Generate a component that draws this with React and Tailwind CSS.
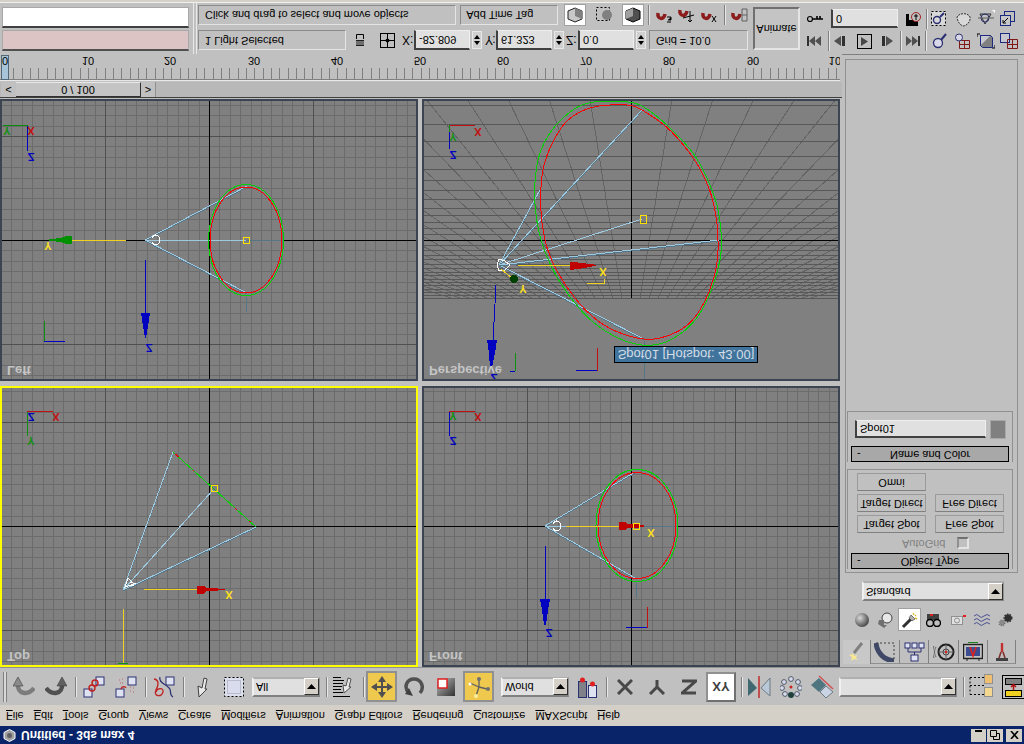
import React from 'react';

// the whole reference is mirrored top to bottom, so every label gets flipped
const T = ({ children, className = '' }) => (
  <span className={`inline-block -scale-y-100 whitespace-nowrap ${className}`}>{children}</span>
);

const Ic = ({ w = 22, h = 22, children, className = '' }) => (
  <svg width={w} height={h} viewBox={`0 0 ${w} ${h}`} className={`block shrink-0 ${className}`}>
    {children}
  </svg>
);

const Div = ({ className = '' }) => (
  <div className={`w-[2px] h-[20px] shrink-0 border-l border-[#808080] border-r border-r-[#e8e8e8] ${className}`} />
);

const Field = ({ children, className = '' }) => (
  <div className={`flex items-center pl-[3px] bg-[#e0e0e0] border-l-2 border-b-2 border-[#404040] border-t border-t-[#eeeeee] border-r border-r-[#eeeeee] ${className}`}>
    <T>{children}</T>
  </div>
);

const Spinner = ({ className = '' }) => (
  <div className={`w-[10px] h-[18px] shrink-0 bg-[#d0d0d0] border border-[#e8e8e8] ${className}`}>
    <Ic w={8} h={16}>
      <polygon points="4,3 1,7 7,7" fill="#000" />
      <polygon points="4,13 1,9 7,9" fill="#000" />
    </Ic>
  </div>
);

const Dropdown = ({ children, className = '' }) => (
  <div className={`flex items-center justify-between h-[20px] shrink-0 bg-[#e0e0e0] border-t-2 border-t-[#b0b0b0] border-b-2 border-b-[#808080] border-r border-r-[#909090] border-l-2 border-l-[#f0f0f0] ${className}`}>
    <T className="pl-[2px]">{children}</T>
    <div className="w-[15px] h-[17px] bg-[#d4d0c8] border border-[#303030] border-t-white border-l-white flex items-center justify-center">
      <Ic w={9} h={5}>
        <polygon points="4.5,0 0,5 9,5" fill="#000" />
      </Ic>
    </div>
  </div>
);

const Box = ({ children, className = '' }) => (
  <div className={`flex items-center border border-[#8a8a8a] border-b-[#e4e4e4] border-r-[#e4e4e4] ${className}`}>
    <T>{children}</T>
  </div>
);

const Btn = ({ children, className = '' }) => (
  <div className={`flex items-center justify-center h-[18px] w-[69px] border border-[#9a9a9a] border-b-[#808080] bg-[#c0c0c0] ${className}`}>
    <T>{children}</T>
  </div>
);

const Rollout = ({ children }) => (
  <div className="relative flex items-center justify-center h-[16px] w-[158px] ml-[3px] bg-[#a8a8a8] border border-black">
    <T className="absolute left-[5px]">-</T>
    <T>{children}</T>
  </div>
);

// toolbar glyphs
const Undo = ({ flip }) => (
  <Ic>
    <g transform={flip ? 'translate(22 0) scale(-1 1)' : undefined}>
      <path d="M5 8 C4 18 15 20 21 12" fill="none" stroke={flip ? '#505050' : '#7c7c7c'} strokeWidth="4.5" />
      <polygon points="5,1 0,10 10,10" fill={flip ? '#606060' : '#8a8a8a'} stroke="#404040" strokeWidth="0.6" />
    </g>
  </Ic>
);
const Sq = ({ x, y, s = 8 }) => <rect x={x} y={y} width={s} height={s} fill="#dfe2f0" stroke="#2a3070" />;
const Link = () => (
  <Ic>
    <Sq x={13} y={1} />
    <Sq x={1} y={13} />
    <circle cx="12" cy="7" r="3" fill="none" stroke="#c02020" strokeWidth="1.4" />
    <circle cx="9" cy="12" r="3" fill="none" stroke="#c02020" strokeWidth="1.4" />
  </Ic>
);
const Unlink = () => (
  <Ic>
    <Sq x={13} y={1} />
    <Sq x={1} y={13} />
    <path d="M4 4h1M7 3h1M5 7h3M8 11h2M15 11h1M18 12h1M15 15h2M18 16h1" stroke="#c06060" strokeDasharray="1 1" />
    <path d="M6 13 C7 10 10 10 11 12" fill="none" stroke="#c02020" strokeWidth="1.4" />
  </Ic>
);
const Bind = () => (
  <Ic>
    <Sq x={13} y={1} />
    <path d="M1 3 C7 4 5 10 3 14 C0 20 8 22 10 16 C11 11 4 12 3 16" fill="none" stroke="#c02020" strokeWidth="1.3" />
    <path d="M7 1 C5 6 12 8 15 11 C20 14 15 18 20 21" fill="none" stroke="#2a3070" strokeWidth="1.2" />
  </Ic>
);
const Cursor = () => (
  <Ic w={11} h={22}>
    <polygon points="2,21 1,10 5,12 7,2 10,3 8,13 10,13" fill="#e8e8e8" stroke="#404040" />
  </Ic>
);
const Region = () => (
  <Ic>
    <rect x="1.5" y="1.5" width="19" height="19" fill="#dcdfee" stroke="#000" strokeDasharray="2 2" />
    <rect x="4.5" y="4.5" width="13" height="13" fill="#d8dcec" stroke="#b8bcc8" />
  </Ic>
);
const Names = () => (
  <Ic w={19} h={22}>
    <path d="M0 1.5h8M0 4.5h11M0 7.5h10M0 10.5h9M0 13.5h8M0 16.5h10M0 20.5h17" stroke="#000" />
    <polygon points="11,17 10,9 13,10 15,2 18,3 16,11 18,11" fill="#e8e8e8" stroke="#505050" />
  </Ic>
);
const Move = () => (
  <Ic>
    <path d="M11 3V19M3 11H19" stroke="#505050" strokeWidth="2" />
    <polygon points="11,0 7,6 15,6" fill="#505050" />
    <polygon points="11,22 7,16 15,16" fill="#505050" />
    <polygon points="0,11 6,7 6,15" fill="#505050" />
    <polygon points="22,11 16,7 16,15" fill="#505050" />
  </Ic>
);
const Rotate = () => (
  <Ic>
    <path d="M6 17 C0 11 4 3 11 3 C18 3 22 11 17 17" fill="none" stroke="#505050" strokeWidth="3.5" />
    <polygon points="2,18 10,20 6,12" fill="#404040" />
  </Ic>
);
const Scale = () => (
  <Ic w={18} h={18}>
    <defs>
      <linearGradient id="sc" x1="0" x2="1" y1="0" y2="1">
        <stop offset="0" stopColor="#c0c0c0" />
        <stop offset="1" stopColor="#303030" />
      </linearGradient>
    </defs>
    <rect x="0" y="0" width="18" height="18" fill="url(#sc)" />
    <rect x="1" y="1" width="9" height="9" fill="#fff" stroke="#e02020" strokeWidth="1.5" />
  </Ic>
);
const Manip = () => (
  <Ic>
    <path d="M11 2 L11 11 L2 7 M11 11 L19 13 M11 11 L8 20" fill="none" stroke="#606060" strokeWidth="1.3" />
    <circle cx="11" cy="3" r="2" fill="#707070" />
    <circle cx="2" cy="8" r="1.5" fill="#fff" />
    <circle cx="20" cy="13" r="2" fill="#707070" />
    <circle cx="8" cy="20" r="2" fill="#f8f0a0" />
  </Ic>
);
const Pivot = () => (
  <Ic w={20} h={22}>
    <rect x="1.5" y="5.5" width="8" height="16" fill="#808088" stroke="#2a3070" />
    <rect x="11.5" y="9.5" width="8" height="12" fill="#dfe2f0" stroke="#2a3070" />
    <circle cx="5.5" cy="4" r="2.5" fill="#e02020" />
    <circle cx="15.5" cy="8" r="2.5" fill="#e02020" />
  </Ic>
);
const Axis = ({ d }) => (
  <Ic w={16} h={16}>
    <path d={d} fill="none" stroke="#484848" strokeWidth="3" />
  </Ic>
);
const Mirror = () => (
  <Ic w={23} h={22}>
    <polygon points="0,2 9,12 0,20" fill="#3f6870" />
    <polygon points="22,2 13,12 22,20" fill="#b8c8d8" stroke="#707880" />
    <path d="M11 0V22" stroke="#c05050" strokeWidth="2" />
  </Ic>
);
const ArrayIc = () => (
  <Ic>
    {[[11, 3], [4, 6], [18, 6], [2, 12], [20, 12], [5, 18], [17, 18]].map(([x, y]) => (
      <circle key={`${x}-${y}`} cx={x} cy={y} r="2.4" fill="#d8dcec" stroke="#505868" />
    ))}
    <circle cx="11" cy="19" r="3" fill="#204040" />
    <circle cx="11" cy="11" r="1.5" fill="#d02020" />
  </Ic>
);
const Align = () => (
  <Ic w={23} h={23}>
    <polygon points="0,10 8,3 15,10 8,17" fill="#4f7580" />
    <polygon points="9,17 15,11 22,17 15,23" fill="#c8d4e4" stroke="#707880" />
    <path d="M8 1 L22 14" stroke="#d05050" strokeWidth="1.5" />
  </Ic>
);
const Layers = () => (
  <Ic w={25} h={26}>
    <path d="M1 3.5H15M1 3.5V20.5M1 11.5H15M1 20.5H15" stroke="#000" strokeDasharray="2 2" />
    <rect x="15.5" y="0.5" width="8" height="9" fill="#f0c070" stroke="#909090" />
    <rect x="15.5" y="13.5" width="8" height="9" fill="#f4d890" stroke="#909090" />
  </Ic>
);
const Last = () => (
  <Ic w={23} h={24}>
    <rect x="0.5" y="0.5" width="22" height="23" fill="none" stroke="#000" />
    <rect x="3.5" y="3.5" width="16" height="6" fill="#808080" stroke="#000" />
    <rect x="3.5" y="15.5" width="16" height="6" fill="#f0d020" stroke="#000" />
    <path d="M11.5 15V10M9 12l2.5-2.5L14 12" fill="none" stroke="#b01010" strokeWidth="1.5" />
  </Ic>
);
const Magnet = ({ extra, className = '' }) => (
  <Ic w={18} h={18} className={className}>
    <path d="M3 7 C2 14 9 14 10 8" fill="none" stroke="#8c1c1c" strokeWidth="3.5" />
    {extra}
  </Ic>
);

const Prev = ({ kind }) => (
  <Ic w={16} h={14}>
    {kind === 'start' && (<><rect x="0" y="2" width="2" height="10" fill="#303030" /><polygon points="2,7 8,2 8,12" fill="#505050" /><polygon points="8,7 14,2 14,12" fill="#505050" /></>)}
    {kind === 'prev' && (<><polygon points="1,7 8,2 8,12" fill="#505050" /><rect x="9" y="2" width="3" height="10" fill="#303030" /></>)}
    {kind === 'next' && (<><rect x="1" y="2" width="3" height="10" fill="#303030" /><polygon points="5,2 12,7 5,12" fill="#505050" /></>)}
    {kind === 'end' && (<><polygon points="1,2 7,7 1,12" fill="#505050" /><polygon points="7,2 13,7 7,12" fill="#505050" /><rect x="13" y="2" width="2" height="10" fill="#303030" /></>)}
  </Ic>
);

const StatusBar = () => (
  <div className="flex h-[51px] shrink-0">
    <div className="ml-[2px] mt-[4px] w-[187px] flex flex-col gap-[2px] shrink-0">
      <div className="h-[21px] bg-white border border-[#a8a8a8] border-b-2 border-b-[#404040]" />
      <div className="h-[21px] bg-[#dcc4c4] border border-[#a8a8a8] border-b-2 border-b-[#505050]" />
    </div>
    <div className="ml-[4px] w-[4px] h-[51px] shrink-0 border-l border-r border-[#e8e8e8]" />
    <div className="ml-[1px] w-[550px] shrink-0 flex flex-col gap-[4px] pt-[1px]">
      <div className="flex items-center h-[21px]">
        <Box className="w-[259px] h-[20px] pl-[6px]">Click and drag to select and move objects</Box>
        <Box className="ml-[4px] w-[98px] h-[20px] pl-[5px]">Add Time Tag</Box>
        <div className="ml-[6px] w-[22px] h-[22px] bg-white border border-[#a0a0a0] flex items-center justify-center shrink-0">
          <Ic w={16} h={16}>
            <polygon points="8,1 15,4 15,12 8,15 1,12 1,4" fill="#c8c8c8" stroke="#202020" />
            <polygon points="8,1 15,4 15,12 8,9" fill="#808080" />
          </Ic>
        </div>
        <Ic w={20} h={18} className="ml-[9px]">
          <rect x="1.5" y="1.5" width="13" height="13" fill="none" stroke="#000" strokeDasharray="2 2" />
          <circle cx="12" cy="9" r="5" fill="#808080" />
        </Ic>
        <div className="ml-[7px] w-[22px] h-[22px] bg-white border border-[#a0a0a0] flex items-center justify-center shrink-0">
          <Ic w={16} h={16}>
            <polygon points="8,1 15,4 15,12 8,15 1,12 1,4" fill="#505050" stroke="#000" />
            <polygon points="1,4 8,1 8,9 1,12" fill="#a0a0a0" />
          </Ic>
        </div>
        <Div className="ml-[4px]" />
        <Magnet className="ml-[5px]" extra={<path d="M12 11h4M16 11v3h-3M12 16h4" stroke="#000" />} />
        <Ic w={18} h={18} className="ml-[5px]">
          <path d="M2 4 C1 11 8 11 9 5" fill="none" stroke="#8c1c1c" strokeWidth="3.5" />
          <path d="M5 12 L16 9 M12 5v10M10 14l2 2 2-2" stroke="#000" fill="none" />
        </Ic>
        <Magnet className="ml-[4px]" extra={<path d="M12 10l4 6M16 10l-4 6" stroke="#000" />} />
        <Div className="ml-[6px]" />
        <Magnet className="ml-[4px]" extra={<path d="M12 3h5v12h-5zM12 9h5" fill="none" stroke="#606060" />} />
      </div>
      <div className="flex items-center h-[22px]">
        <Box className="w-[148px] h-[20px] pl-[6px]">1 Light Selected</Box>
        <Ic w={8} h={14} className="ml-[10px]">
          <path d="M0.5 1.5H7.5V6M0.5 1.5V6" fill="none" stroke="#000" />
          <rect x="0" y="7" width="8" height="6" fill="#202020" />
          <path d="M0 9h8M0 11h8" stroke="#c0c0c0" />
        </Ic>
        <Ic w={15} h={15} className="ml-[16px]">
          <rect x="0.5" y="0.5" width="14" height="14" fill="none" stroke="#000" />
          <path d="M7.5 0V15M0 7.5H15" stroke="#000" />
          <circle cx="7.5" cy="7.5" r="2" fill="#000" />
        </Ic>
        <T className="ml-[7px] w-[12px] text-[12px]">X:</T>
        <Field className="w-[56px] h-[20px] shrink-0">-82.809</Field>
        <Spinner className="ml-[2px]" />
        <T className="ml-[3px] w-[11px] text-[12px]">Y:</T>
        <Field className="w-[56px] h-[20px] shrink-0">61.323</Field>
        <Spinner className="ml-[2px]" />
        <T className="ml-[2px] w-[12px] text-[12px]">Z:</T>
        <Field className="w-[56px] h-[20px] shrink-0">0.0</Field>
        <Spinner className="ml-[2px]" />
        <Box className="ml-[3px] w-[99px] h-[20px] pl-[6px]">Grid = 10.0</Box>
      </div>
    </div>
    <div className="ml-[5px] mt-[4px] w-[47px] h-[43px] shrink-0 flex items-center justify-center bg-[#c4c4c4] border-2 border-[#707070] border-r-[#e4e4e4] border-b-[#e4e4e4]">
      <T>Animate</T>
    </div>
    <div className="ml-[7px] flex flex-col shrink-0">
      <div className="flex items-center h-[25px] mt-[3px]">
        <Ic w={16} h={10}>
          <circle cx="3" cy="5" r="2.5" fill="none" stroke="#000" strokeWidth="1.2" />
          <path d="M5 5H16M10 5V2M13 5V2" stroke="#000" strokeWidth="1.6" />
        </Ic>
        <Field className="ml-[8px] w-[67px] h-[19px] shrink-0">0</Field>
        <Ic w={16} h={16} className="ml-[8px]">
          <rect x="0" y="9" width="12" height="6" fill="#000" />
          <rect x="0" y="3" width="3" height="8" fill="#000" />
          <circle cx="10" cy="6" r="4.5" fill="#c0c0c0" stroke="#a02020" />
          <path d="M10 3v6M8 5h4" stroke="#000" />
        </Ic>
        <Div className="ml-[4px]" />
        <Ic w={15} h={15} className="ml-[3px]">
          <rect x="0.5" y="0.5" width="14" height="14" fill="#d8d8d8" stroke="#000" strokeDasharray="2 2" />
          <circle cx="6" cy="9" r="3.5" fill="none" stroke="#2a3070" strokeWidth="1.4" />
          <path d="M9 6l4-4" stroke="#2a3070" strokeWidth="2" />
        </Ic>
        <Ic w={16} h={16} className="ml-[9px]">
          <path d="M2 7C2 2 13 1 15 6C16 10 12 15 8 15C5 14 3 11 2 7Z" fill="#d8d8d8" stroke="#303030" strokeDasharray="2 1" />
        </Ic>
        <Ic w={18} h={17} className="ml-[6px]">
          <polygon points="3,4 14,4 8,14" fill="none" stroke="#303030" />
          <circle cx="8" cy="8" r="4" fill="none" stroke="#2a3070" />
          <path d="M1 8h16" stroke="#606060" />
          <polygon points="15,0 18,0 18,3" fill="#fff" />
        </Ic>
        <Ic w={15} h={15} className="ml-[5px]">
          <rect x="4.5" y="0.5" width="10" height="10" fill="none" stroke="#1c2a80" />
          <rect x="0.5" y="4.5" width="10" height="10" fill="#c8c8c8" stroke="#1c2a80" />
          <path d="M3 12l5-5M3 9v3h3" fill="none" stroke="#000" />
        </Ic>
      </div>
      <div className="flex items-center h-[18px] mt-[1px]">
        <Prev kind="start" />
        <Div className="ml-[5px] h-[14px]" />
        <div className="ml-[3px]"><Prev kind="prev" /></div>
        <Ic w={15} h={15} className="ml-[8px]">
          <rect x="0.5" y="0.5" width="14" height="14" fill="#c0c0c0" stroke="#000" />
          <polygon points="4,3 11,7.5 4,12" fill="#484848" />
        </Ic>
        <div className="ml-[9px]"><Prev kind="next" /></div>
        <Div className="ml-[3px] h-[14px]" />
        <div className="ml-[3px]"><Prev kind="end" /></div>
        <Div className="ml-[4px] h-[14px]" />
        <Ic w={15} h={16} className="ml-[5px]">
          <circle cx="6" cy="10" r="4.5" fill="#d8d8e8" stroke="#2a3070" strokeWidth="1.3" />
          <path d="M9 7l5-6" stroke="#2a3070" strokeWidth="2" />
        </Ic>
        <Ic w={16} h={16} className="ml-[7px]">
          <path d="M5.5 7.5H15.5V15.5H5.5ZM10.5 7.5V15.5M5.5 11.5H15.5" fill="none" stroke="#801818" />
          <circle cx="5" cy="4.5" r="3.5" fill="#d8d8e8" stroke="#2a3070" />
        </Ic>
        <Ic w={18} h={16} className="ml-[7px]">
          <path d="M0 1h3M0 1v3M15 15h3M18 15v-3" stroke="#000" />
          <rect x="3.5" y="2.5" width="10" height="10" fill="#c8c8d0" stroke="#1c2a80" />
          <path d="M13.5 2.5l2 2v10h-10l-2-2" fill="#808080" stroke="#1c2a80" />
        </Ic>
        <Ic w={18} h={16} className="ml-[5px]">
          <rect x="0.5" y="0.5" width="9" height="9" fill="#c8c8d0" stroke="#1c2a80" />
          <path d="M7.5 6.5H17.5V15.5H7.5ZM12.5 6.5V15.5M7.5 11.5H17.5" fill="none" stroke="#801818" />
        </Ic>
      </div>
    </div>
  </div>
);

const LABELS = [[5, '0'], [88, '10'], [170, '20'], [254, '30'], [337, '40'], [420, '50'], [503, '60'], [586, '70'], [669, '80'], [753, '90'], [838, '100']];

const Timeline = () => (
  <svg width="840" height="28" viewBox="0 54 840 28" shapeRendering="crispEdges" className="block shrink-0">
    {Array.from({ length: 101 }, (_, i) => (
      <line key={i} x1={Math.round(5 + i * 8.31) + 0.5} x2={Math.round(5 + i * 8.31) + 0.5} y1="68" y2="79" stroke="#808080" />
    ))}
    <line x1="0" x2="840" y1="79.5" y2="79.5" stroke="#808080" />
    <line x1="0" x2="840" y1="80.5" y2="80.5" stroke="#e8e8e8" />
    <rect x="1.5" y="55.5" width="7" height="24" fill="#a8c4d8" stroke="#506878" />
    {LABELS.map(([x, t]) => (
      <text key={t} transform={`translate(${x} 57) scale(1 -1)`} textAnchor="middle" fontSize="11" fill="#000">{t}</text>
    ))}
  </svg>
);

const SliderRow = () => (
  <div className="flex h-[16px] shrink-0 bg-[#b8b8b8] border-b border-[#404040]">
    <div className="ml-[1px] w-[15px] flex items-center justify-center bg-[#c0c0c0]"><T>&lt;</T></div>
    <div className="w-[125px] flex items-center justify-center bg-[#c4c4c4] border-t border-[#e8e8e8] border-r border-r-[#303030] border-b border-b-[#303030]"><T>0 / 100</T></div>
    <div className="w-[15px] flex items-center justify-center bg-[#c0c0c0] border-r border-[#909090]"><T>&gt;</T></div>
  </div>
);

// x/y/z tags drawn inside a viewport, y is the top of the mirrored letter
const Tag = ({ x, y, c, children, size = 11 }) => (
  <text transform={`translate(${x} ${y}) scale(1 -1)`} textAnchor="middle" fontSize={size} fontWeight="bold" fill={c}>{children}</text>
);

const Beam = ({ x1, y1, x2, y2 }) => (
  <>
    <line x1={x1} y1={y1 + 1} x2={x2} y2={y2 + 1} stroke="#567688" />
    <line x1={x1} y1={y1} x2={x2} y2={y2} stroke="#9cc8e0" />
  </>
);

const flatGrid = (cx, cy, x, y, w, h) => {
  const lines = [];
  for (let k = -40; k <= 40; k++) {
    const lx = Math.round(cx + k * 10.4) + 0.5;
    const ly = Math.round(cy + k * 10.4) + 0.5;
    const col = k === 0 ? null : k % 10 === 0 ? '#505050' : '#6c6c6c';
    if (!col) continue;
    if (lx > x && lx < x + w) lines.push([lx, y, lx, y + h, col, k % 10 === 0]);
    if (ly > y && ly < y + h) lines.push([x, ly, x + w, ly, col, k % 10 === 0]);
  }
  lines.sort((a, b) => a[5] - b[5]);
  return (
    <>
      {lines.map((l, i) => <line key={i} x1={l[0]} y1={l[1]} x2={l[2]} y2={l[3]} stroke={l[4]} />)}
      <line x1={cx + 0.5} x2={cx + 0.5} y1={y} y2={y + h} stroke="#000" />
      <line x1={x} x2={x + w} y1={cy + 0.5} y2={cy + 0.5} stroke="#000" />
    </>
  );
};

const PERSP_Z = [28, 85, 135, 180, 218, 252, 283, 310, 335, 358, 378, 397, 415, 448, 463, 477, 490, 503, 515, 527, 538, 548, 558, 568, 578, 588, 597, 605];

const perspGrid = () => (
  <>
    {Array.from({ length: 41 }, (_, i) => i - 20).filter((k) => k !== 0).map((k) => (
      <line key={k} x1={631 + k * 41} y1="99" x2={631 + k * 9} y2="298" stroke="#646464" />
    ))}
    {PERSP_Z.map((z) => (
      <line key={z} x1="424" x2="838" y1={Math.round(96 + z / 3) + 0.5} y2={Math.round(96 + z / 3) + 0.5} stroke="#585858" />
    ))}
    <line x1="631.5" x2="631.5" y1="99" y2="298" stroke="#000" />
    <line x1="424" x2="838" y1="240.5" y2="240.5" stroke="#000" />
  </>
);

// closed smooth curve through the midpoints of the traced outline
const egg = (pts) => {
  const p = pts.map(([x, y]) => [422 + x / 3, 96 + y / 3]);
  const mid = (a, b) => `${(a[0] + b[0]) / 2} ${(a[1] + b[1]) / 2}`;
  let d = `M${mid(p[p.length - 1], p[0])}`;
  p.forEach((pt, i) => {
    d += ` Q${pt[0]} ${pt[1]} ${mid(pt, p[(i + 1) % p.length])}`;
  });
  return `${d} Z`;
};
const RED_EGG = [[600, 25], [510, 30], [440, 65], [400, 120], [365, 200], [355, 280], [357, 380], [380, 480], [430, 570], [490, 645], [560, 700], [660, 733], [730, 725], [800, 690], [850, 620], [885, 520], [890, 430], [880, 340], [860, 270], [820, 190], [745, 100], [690, 60], [640, 30]];
const GREEN_EGG = [[490, 15], [420, 65], [375, 120], [345, 190], [335, 300], [350, 420], [390, 520], [440, 600], [500, 670], [570, 720], [650, 750], [730, 745], [810, 690], [860, 610], [895, 500], [900, 430], [890, 340], [870, 280], [825, 180], [745, 95], [680, 40], [630, 15]];

const Viewport = ({ x, y, w, h, label, active, children }) => (
  <div className={`relative overflow-hidden border-2 ${active ? 'border-[#ffff00]' : 'border-[#3c4452]'}`}>
    <svg width={w - 4} height={h - 4} viewBox={`${x + 2} ${y + 2} ${w - 4} ${h - 4}`} shapeRendering="crispEdges" className="block bg-[#808080]">
      {children}
    </svg>
    <T className="absolute left-[5px] bottom-[2px] text-[13px] font-bold text-[#c4c4c4]">{label}</T>
  </div>
);

const Viewports = () => (
  <div className="grid grid-cols-[418px_418px] grid-rows-[282px_281px] gap-x-[4px] gap-y-[5px] mt-[1px]">
    <Viewport x={0} y={99} w={418} h={282} label="Left">
      {flatGrid(209, 240, 2, 101, 414, 278)}
      <path d="M3 125.5H27.5V151" fill="none" stroke="#0a8a0a" />
      <line x1="27.5" y1="126" x2="27.5" y2="151" stroke="#0000c0" />
      <Tag x={7} y={127} c="#109010">Y</Tag>
      <Tag x={31} y={127} c="#c01010">X</Tag>
      <Tag x={31} y={153} c="#0000c0">Z</Tag>
      <line x1="72" x2="126" y1="240.5" y2="240.5" stroke="#f0d020" strokeWidth="1" />
      <polygon points="45,240 60,238 66,236 72,236 72,244 66,244 60,242" fill="#009000" />
      <Tag x={48} y={242} c="#ffe020">Y</Tag>
      <Beam x1={145} y1={240} x2={247} y2={186} />
      <Beam x1={145} y1={240} x2={247} y2={293} />
      <line x1="145" x2="246" y1="240.5" y2="240.5" stroke="#9cc8e0" />
      <line x1="246" x2="283" y1="240.5" y2="240.5" stroke="#567688" />
      <line x1="246.5" x2="246.5" y1="297" y2="312" stroke="#567688" />
      <path d="M155 235 A5 5 0 0 1 155 245 M155 235 A5 5 0 0 0 152 238 M155 245 A5 5 0 0 1 152 242" fill="none" stroke="#fff" strokeWidth="1.2" />
      <ellipse cx="246" cy="240" rx="37.5" ry="55.5" fill="none" stroke="#00d000" />
      <ellipse cx="246" cy="240" rx="36" ry="53" fill="none" stroke="#ff0000" />
      <rect x="243.5" y="237.5" width="6" height="6" fill="none" stroke="#ffe000" />
      <line x1="145.5" x2="145.5" y1="260" y2="314" stroke="#0000c0" />
      <polygon points="141,313 150,313 148,326 146,338 145,338 143,326" fill="#0000c0" />
      <Tag x={149} y={344} c="#0000c0">Z</Tag>
      <path d="M44.5 321V341.5" fill="none" stroke="#109010" />
      <line x1="44" x2="65" y1="341.5" y2="341.5" stroke="#0000c0" />
    </Viewport>

    <div className="relative">
      <Viewport x={422} y={99} w={418} h={282} label="Perspective">
        {perspGrid()}
        <line x1="449" x2="475" y1="125.5" y2="125.5" stroke="#c01010" />
        <line x1="449.5" x2="449.5" y1="125" y2="149" stroke="#0000c0" />
        <line x1="449.5" x2="449.5" y1="125" y2="132" stroke="#109010" />
        <Tag x={453} y={133} c="#109010">Y</Tag>
        <Tag x={478} y={128} c="#c01010">X</Tag>
        <Tag x={453} y={151} c="#0000c0">Z</Tag>
        <Beam x1={499} y1={265} x2={642} y2={110} />
        <Beam x1={499} y1={265} x2={540} y2={190} />
        <Beam x1={499} y1={265} x2={644} y2={339} />
        <Beam x1={499} y1={265} x2={719} y2={240} />
        <line x1="499" y1="265" x2="642" y2="219" stroke="#9cc8e0" />
        <line x1="644.5" x2="644.5" y1="341" y2="379" stroke="#567688" />
        <path d={egg(GREEN_EGG)} fill="none" stroke="#00d000" />
        <path d={egg(RED_EGG)} fill="none" stroke="#ff0000" />
        <rect x="640.5" y="215.5" width="6" height="8" fill="none" stroke="#ffe000" />
        <polygon points="499,259 505,261 510,265 505,270 499,271 497,265" fill="none" stroke="#fff" />
        <line x1="518" x2="570" y1="265.5" y2="265.5" stroke="#f0d020" />
        <polygon points="570,262 578,262.5 590,264 598,265 590,267 578,269 570,270" fill="#c00000" />
        <Tag x={603} y={268} c="#ffe020">X</Tag>
        <path d="M587 283.5H604.5V279" fill="none" stroke="#f0d020" />
        <line x1="501" y1="269" x2="513" y2="279" stroke="#f0d020" />
        <circle cx="514" cy="279" r="3.8" fill="#004000" />
        <Tag x={523} y={285} c="#ffe020">Y</Tag>
        <line x1="496" y1="285" x2="493" y2="341" stroke="#0000c0" />
        <polygon points="487,340 497,340 495,353 492,368 490,368 489,353" fill="#0000c0" />
        <Tag x={494} y={374} c="#0000c0">Z</Tag>
        <path d="M597.5 348V370.5" fill="none" stroke="#c01010" />
        <line x1="576" x2="597" y1="370.5" y2="370.5" stroke="#0000c0" />
        <path d="M515.5 353V371" fill="none" stroke="#109010" />
        <line x1="510" x2="515" y1="371.5" y2="371.5" stroke="#0000c0" />
      </Viewport>
      {/* hover tooltip */}
      <div className="absolute left-[192px] top-[247px] w-[144px] h-[17px] flex items-center justify-center bg-[#41749c] border border-black text-[#d4dce4] text-[13px]">
        <T>Spot01 [Hotspot: 43.00]</T>
      </div>
    </div>

    <Viewport x={0} y={386} w={418} h={281} label="Top" active>
      {flatGrid(209, 526, 2, 388, 414, 277)}
      <line x1="27" x2="53" y1="411.5" y2="411.5" stroke="#c01010" />
      <line x1="27.5" x2="27.5" y1="412" y2="436" stroke="#109010" />
      <Tag x={31} y={437} c="#109010">Y</Tag>
      <Tag x={56} y={413} c="#c01010">X</Tag>
      <Tag x={31} y={413} c="#0000c0">Z</Tag>
      <Beam x1={123} y1={590} x2={173} y2={452} />
      <Beam x1={123} y1={590} x2={256} y2={527} />
      <line x1="123" y1="590" x2="213" y2="490" stroke="#9cc8e0" />
      <line x1="173" y1="452" x2="256" y2="527" stroke="#00d000" />
      <path d="M175 454l4 3M193 470l1 1M235 508l2 2M249 521l2 1" stroke="#e00000" />
      <rect x="211.5" y="485.5" width="6" height="6" fill="none" stroke="#ffe000" />
      <path d="M128 578l-3 9 9-3zM130 582l6 2M129 585l5 1" fill="none" stroke="#fff" />
      <line x1="144" x2="197" y1="589.5" y2="589.5" stroke="#f0d020" />
      <polygon points="197,586 204,586 206,588 214,588 225,589.5 214,591 206,591 204,594 197,594" fill="#c00000" />
      <Tag x={229} y={591} c="#ffe020">X</Tag>
      <line x1="123.5" x2="123.5" y1="609" y2="663" stroke="#f0d020" />
      <line x1="118" x2="128" y1="663.5" y2="663.5" stroke="#109010" />
    </Viewport>

    <Viewport x={422} y={386} w={418} h={281} label="Front">
      {flatGrid(631, 526, 424, 388, 414, 277)}
      <line x1="449" x2="475" y1="411.5" y2="411.5" stroke="#c01010" />
      <line x1="449.5" x2="449.5" y1="412" y2="436" stroke="#0000c0" />
      <Tag x={453} y={412} c="#109010">Y</Tag>
      <Tag x={478} y={413} c="#c01010">X</Tag>
      <Tag x={453} y={437} c="#0000c0">Z</Tag>
      <Beam x1={545} y1={526} x2={635} y2={472} />
      <Beam x1={545} y1={526} x2={635} y2={578} />
      <line x1="545" x2="637" y1="526.5" y2="526.5" stroke="#9cc8e0" />
      <line x1="637" x2="677" y1="526.5" y2="526.5" stroke="#567688" />
      <line x1="636.5" x2="636.5" y1="583" y2="598" stroke="#567688" />
      <path d="M556 521 A5 5 0 0 1 556 531 M556 521 A5 5 0 0 0 553 524 M556 531 A5 5 0 0 1 553 528" fill="none" stroke="#fff" strokeWidth="1.2" />
      <ellipse cx="637" cy="525.5" rx="41" ry="56" fill="none" stroke="#00d000" />
      <ellipse cx="637" cy="525.5" rx="39" ry="53" fill="none" stroke="#ff0000" />
      <line x1="566" x2="619" y1="526.5" y2="526.5" stroke="#f0d020" />
      <polygon points="619,522 625,522 627,524 636,524 647,526 636,528 627,528 625,530 619,530" fill="#c00000" />
      <rect x="633.5" y="523.5" width="6" height="6" fill="none" stroke="#ffe000" />
      <Tag x={651} y={529} c="#ffe020">X</Tag>
      <line x1="545.5" x2="545.5" y1="546" y2="599" stroke="#0000c0" />
      <polygon points="540,599 550,599 548,610 546,625 544,625 542,610" fill="#0000c0" />
      <Tag x={549} y={629} c="#0000c0">Z</Tag>
      <path d="M647.5 607V627.5" fill="none" stroke="#c01010" />
      <line x1="626" x2="647" y1="627.5" y2="627.5" stroke="#0000c0" />
    </Viewport>
  </div>
);

const CommandPanel = () => (
  <div className="w-[182px] shrink-0 border-t border-[#808080] flex flex-col">
    <div className="ml-[3px] mt-[4px] w-[173px] h-[514px] shrink-0 border border-[#909090] flex flex-col justify-end pb-[3px] pl-[1px]">
      <div className="w-[166px] h-[51px] flex flex-col justify-between border border-[#909090] border-b-0">
        <div className="flex mt-[8px] ml-[7px]">
          <Field className="w-[131px] h-[18px] shrink-0">Spot01</Field>
          <div className="ml-[4px] w-[16px] h-[19px] bg-[#808080] border border-[#a8a8a8]" />
        </div>
        <Rollout>Name and Color</Rollout>
      </div>
      <div className="mt-[7px] w-[166px] h-[100px] flex flex-col border border-[#909090] border-b-0">
        <div className="ml-[9px] mt-[3px] flex gap-[9px] h-[18px]"><Btn>Omni</Btn></div>
        <div className="ml-[9px] mt-[3px] flex gap-[9px]"><Btn>Target Direct</Btn><Btn>Free Direct</Btn></div>
        <div className="ml-[9px] mt-[3px] flex gap-[9px]"><Btn>Target Spot</Btn><Btn>Free Spot</Btn></div>
        <div className="mt-[4px] flex items-center h-[12px] ml-[54px] text-[#808080]">
          <T>AutoGrid</T>
          <div className="ml-[12px] w-[12px] h-[12px] border-2 border-[#909090] border-t-[#707070] border-r-[#e4e4e4] border-b-[#e4e4e4]" />
        </div>
        <div className="mt-[4px]"><Rollout>Object Type</Rollout></div>
      </div>
    </div>
    <Dropdown className="ml-[20px] mt-[8px] w-[142px]">Standard</Dropdown>
    <div className="flex items-center mt-[7px] h-[23px] ml-[13px]">
      <Ic w={14} h={14}>
        <defs>
          <radialGradient id="sph" cx="0.35" cy="0.35" r="0.8">
            <stop offset="0" stopColor="#d8d8d8" />
            <stop offset="1" stopColor="#303030" />
          </radialGradient>
        </defs>
        <circle cx="7" cy="7" r="7" fill="url(#sph)" />
      </Ic>
      <Ic w={15} h={16} className="ml-[9px]">
        <circle cx="9" cy="6" r="5" fill="#e8e8e8" stroke="#404040" />
        <path d="M1 8h5v5h3l-3 3-6-4z" fill="#707070" />
      </Ic>
      <div className="ml-[5px] w-[23px] h-[23px] bg-white border border-[#a0a0a0] flex items-center justify-center">
        <Ic w={18} h={18}>
          <path d="M2 16 L11 7" stroke="#303030" strokeWidth="3" />
          <polygon points="10,4 14,8 11,10 8,7" fill="#b0b0b0" stroke="#303030" strokeWidth="0.6" />
          <path d="M12 2l1 2M15 4l-1 1M16 8l-2-1" stroke="#e0c030" strokeWidth="1.4" />
        </Ic>
      </div>
      <Ic w={15} h={14} className="ml-[5px]">
        <rect x="1" y="1" width="12" height="6" fill="#404040" />
        <rect x="4" y="1" width="3" height="2" fill="#e02020" />
        <circle cx="4" cy="10" r="3.5" fill="none" stroke="#000" strokeWidth="1.4" />
        <circle cx="11" cy="10" r="3.5" fill="none" stroke="#000" strokeWidth="1.4" />
      </Ic>
      <Ic w={15} h={13} className="ml-[10px]">
        <rect x="0.5" y="3.5" width="11" height="8" fill="#e0e0e0" stroke="#909090" />
        <circle cx="6" cy="7.5" r="2.5" fill="none" stroke="#909090" />
        <path d="M12 3h3" stroke="#e02020" strokeWidth="2" />
      </Ic>
      <Ic w={16} h={14} className="ml-[8px]">
        <path d="M0 3q3-3 5 0t5 0 6 0M0 7q3-3 5 0t5 0 6 0M0 11q3-3 5 0t5 0 6 0" fill="none" stroke="#4a5090" />
      </Ic>
      <Ic w={15} h={14} className="ml-[8px]">
        <circle cx="10" cy="5" r="3.5" fill="#303030" stroke="#303030" strokeDasharray="1.5 1" strokeWidth="2" />
        <circle cx="4" cy="10" r="2.5" fill="#909090" stroke="#707070" strokeDasharray="1 1" strokeWidth="2" />
      </Ic>
    </div>
    <div className="flex h-[24px] mt-[9px] ml-[1px]">
      <div className="w-[28px] flex items-center justify-center bg-[#c8c8c8] border-r border-[#808080]">
        <Ic w={18} h={20}>
          <path d="M14 1 L6 11" stroke="#808080" strokeWidth="3" />
          <path d="M5 11l1 3 3-1-1 3 2 2-4-1-3 2 1-4-3-2 4-1z" fill="#f8e890" />
        </Ic>
      </div>
      <div className="w-[29px] flex items-center justify-center border-r border-[#808080] border-b border-b-[#909090]">
        <Ic w={22} h={20}>
          <path d="M2 1 C3 11 10 18 20 19" fill="none" stroke="#404868" strokeWidth="5" />
          <path d="M2 1h18v18" fill="none" stroke="#404040" strokeDasharray="2 2" />
        </Ic>
      </div>
      <div className="w-[29px] flex items-center justify-center border-r border-[#808080] border-b border-b-[#909090]">
        <Ic w={21} h={20}>
          <path d="M4 5V10H17V5M10.5 10V14" fill="none" stroke="#2a3070" />
          <rect x="1" y="1" width="5" height="5" fill="#dfe2f0" stroke="#2a3070" />
          <rect x="8" y="1" width="5" height="5" fill="#dfe2f0" stroke="#2a3070" />
          <rect x="15" y="1" width="5" height="5" fill="#dfe2f0" stroke="#2a3070" />
          <rect x="7" y="13" width="7" height="6" fill="#dfe2f0" stroke="#2a3070" />
        </Ic>
      </div>
      <div className="w-[30px] flex items-center justify-center border-r border-[#808080] border-b border-b-[#909090]">
        <Ic w={22} h={18}>
          <circle cx="13" cy="9" r="7.5" fill="#c0c0c0" stroke="#202020" strokeWidth="2" />
          <circle cx="13" cy="9" r="3" fill="none" stroke="#404040" />
          <path d="M13 1.5V16.5M5.5 9H20.5" stroke="#606060" />
          <circle cx="13" cy="9" r="1.2" fill="#e02020" />
          <path d="M3 4 C1 8 1 10 3 14M1 3 C-1 8 -1 10 1 15" fill="none" stroke="#606060" />
        </Ic>
      </div>
      <div className="w-[29px] flex items-center justify-center border-r border-[#808080] border-b border-b-[#909090]">
        <Ic w={20} h={20}>
          <rect x="0.5" y="2.5" width="19" height="14" fill="#c0c0c0" stroke="#202020" strokeWidth="1.4" />
          <rect x="3" y="5" width="14" height="9" fill="#3c4c90" />
          <path d="M7 5l3 9 3-9" fill="none" stroke="#e02020" strokeWidth="1.6" />
          <path d="M5 0h10" stroke="#208020" strokeWidth="2" />
          <path d="M4 17v2M16 17v2" stroke="#202020" />
        </Ic>
      </div>
      <div className="w-[28px] flex items-center justify-center border-r border-[#808080] border-b border-b-[#909090]">
        <Ic w={14} h={20}>
          <path d="M7 1V10" stroke="#c03030" strokeWidth="2.4" />
          <path d="M6 10L4 16M8 10L10 16" stroke="#803030" strokeWidth="1.6" />
          <rect x="1" y="16" width="12" height="3" fill="#404040" />
        </Ic>
      </div>
    </div>
  </div>
);

const YellowBtn = ({ children, className = '' }) => (
  <div className={`w-[31px] h-[31px] shrink-0 flex items-center justify-center bg-[#efc84e] border-2 border-[#909090] ${className}`}>
    {children}
  </div>
);

const BottomBar = () => (
  <div className="flex items-center h-[38px] shrink-0 border-t border-[#909090] bg-[#c0c0c0]">
    <div className="ml-[3px] w-[4px] h-[30px] shrink-0 border-l border-r border-[#808080] bg-[#d8d8d8]" />
    <div className="ml-[6px]"><Undo /></div>
    <div className="ml-[10px]"><Undo flip /></div>
    <Div className="ml-[8px]" />
    <div className="ml-[6px]"><Link /></div>
    <div className="ml-[10px]"><Unlink /></div>
    <Div className="ml-[8px]" />
    <div className="ml-[6px]"><Bind /></div>
    <Div className="ml-[8px]" />
    <div className="ml-[12px]"><Cursor /></div>
    <div className="ml-[15px]"><Region /></div>
    <Dropdown className="ml-[7px] w-[68px]">All</Dropdown>
    <Div className="ml-[6px]" />
    <div className="ml-[5px]"><Names /></div>
    <Div className="ml-[11px]" />
    <YellowBtn className="ml-[1px]"><Move /></YellowBtn>
    <div className="ml-[6px]"><Rotate /></div>
    <div className="ml-[12px]"><Scale /></div>
    <YellowBtn className="ml-[8px]"><Manip /></YellowBtn>
    <Dropdown className="ml-[7px] w-[68px]">World</Dropdown>
    <div className="ml-[8px]"><Pivot /></div>
    <Div className="ml-[9px]" />
    <div className="ml-[9px]"><Axis d="M1 1L15 15M15 1L1 15" /></div>
    <div className="ml-[16px]"><Axis d="M8 1V8M8 8L1 15M8 8L15 15" /></div>
    <div className="ml-[16px]"><Axis d="M1 2H15L1 14H15" /></div>
    <div className="ml-[9px] w-[30px] h-[30px] shrink-0 flex items-center justify-center bg-white border-2 border-[#909090] border-r-[#707070] border-b-[#707070] font-bold text-[13px] text-[#404040]"><T>XY</T></div>
    <Div className="ml-[5px]" />
    <div className="ml-[5px]"><Mirror /></div>
    <div className="ml-[9px]"><ArrayIc /></div>
    <div className="ml-[9px]"><Align /></div>
    <Dropdown className="ml-[5px] w-[118px]" />
    <Div className="ml-[6px]" />
    <div className="ml-[4px]"><Layers /></div>
    <div className="ml-[8px]"><Last /></div>
  </div>
);

const MENU = ['File', 'Edit', 'Tools', 'Group', 'Views', 'Create', 'Modifiers', 'Animation', 'Graph Editors', 'Rendering', 'Customize', 'MAXScript', 'Help'];

const MenuBar = () => (
  <div className="flex items-center gap-[10px] pl-[6px] h-[21px] shrink-0 bg-[#d4d0c8] text-black">
    {MENU.map((m) => (
      <T key={m} className="[&::first-letter]:underline">{m}</T>
    ))}
  </div>
);

const TitleBar = () => (
  <div className="flex items-center h-[18px] shrink-0 bg-[#0a246a] text-white">
    <Ic w={13} h={13} className="ml-[3px]">
      <polygon points="6.5,0.5 12,3.5 12,9.5 6.5,12.5 1,9.5 1,3.5" fill="#a0a0a0" stroke="#fff" />
      <circle cx="6.5" cy="6.5" r="2.5" fill="#606060" />
    </Ic>
    <T className="ml-[5px] font-bold text-[12px]">Untitled - 3ds max 4</T>
    <div className="ml-auto flex items-center mr-[2px] gap-[1px]">
      <div className="w-[15px] h-[13px] bg-[#d4d0c8] flex items-start justify-center pt-[1px]">
        <div className="w-[7px] h-[2px] bg-black" />
      </div>
      <div className="w-[16px] h-[13px] bg-[#d4d0c8] flex items-center justify-center">
        <Ic w={10} h={10}>
          <path d="M0.5 0.5H6.5V6.5H0.5Z M3.5 6.5V9.5H9.5V3.5H6.5" fill="none" stroke="#000" />
        </Ic>
      </div>
      <div className="ml-[2px] w-[16px] h-[13px] bg-[#d4d0c8] flex items-center justify-center">
        <Ic w={9} h={8}>
          <path d="M1 0L8 8M8 0L1 8" stroke="#000" strokeWidth="1.6" />
        </Ic>
      </div>
    </div>
  </div>
);

export default function App() {
  return (
    <div className="w-[1024px] h-[744px] flex flex-col overflow-hidden bg-[#c0c0c0] text-black text-[11px] leading-none font-['Liberation_Sans',sans-serif]">
      <div className="h-[3px] shrink-0 bg-[#d4d0c8] border-b border-[#f0f0f0]" />
      <StatusBar />
      <div className="flex h-[613px] shrink-0">
        <div className="w-[842px] shrink-0 flex flex-col">
          <Timeline />
          <SliderRow />
          <Viewports />
        </div>
        <CommandPanel />
      </div>
      <BottomBar />
      <MenuBar />
      <TitleBar />
    </div>
  );
}
